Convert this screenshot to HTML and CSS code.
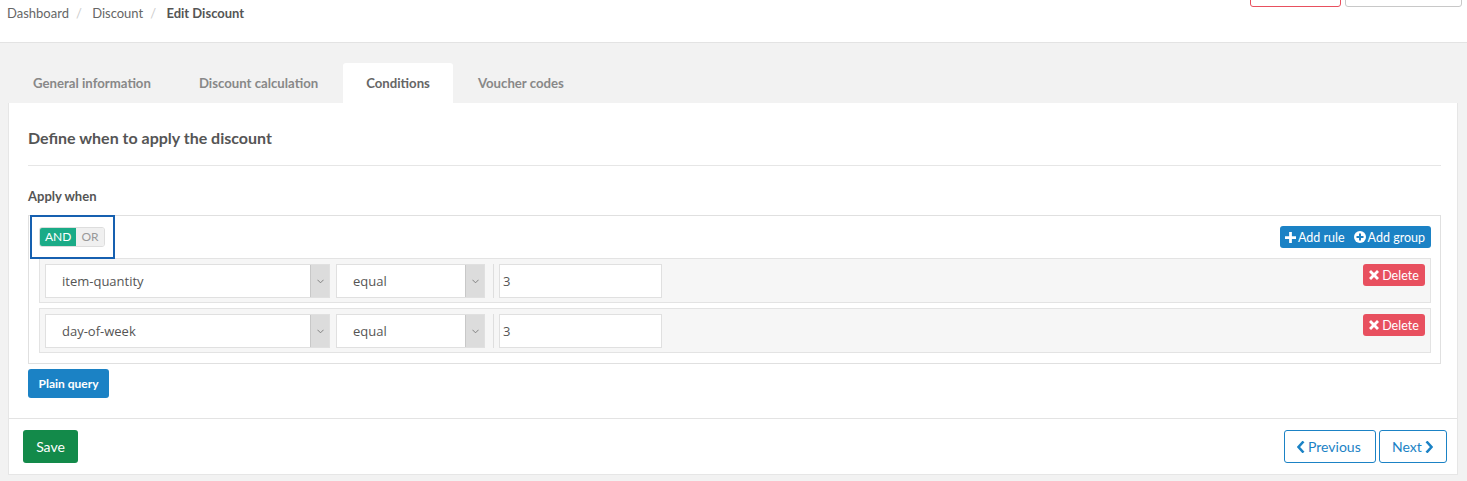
FILE: index.html
```html
<!DOCTYPE html>
<html>
<head>
<meta charset="utf-8">
<link rel="stylesheet" href="styles.css">
</head>
<body>
<header class="topbar">
  <nav class="crumbs">
    <span class="crumb">Dashboard</span><span class="sep">/</span>
    <span class="crumb">Discount</span><span class="sep">/</span>
    <span class="crumb current">Edit Discount</span>
  </nav>
  <div class="top-actions">
    <button class="btn-top danger-outline" aria-label="Delete"></button>
    <button class="btn-top grey-outline" aria-label="Back"></button>
  </div>
</header>
<main class="content">
  <ul class="tabs">
    <li class="tab">General information</li>
    <li class="tab">Discount calculation</li>
    <li class="tab active">Conditions</li>
    <li class="tab">Voucher codes</li>
  </ul>
  <section class="panel">
    <div class="panel-body">
      <h3 class="section-title">Define when to apply the discount</h3>
      <div class="divider"></div>
      <div class="label">Apply when</div>
      <div class="qb-group">
        <div class="focus-ring"></div>
        <div class="qb-header">
          <div class="toggle">
            <span class="tg on">AND</span><span class="tg">OR</span>
          </div>
          <button class="btn-add">
            <svg class="ic" viewBox="0 0 12 12" width="11" height="11"><path d="M4.5 0h3v4.5H12v3H7.5V12h-3V7.5H0v-3h4.5z" fill="#fff"/></svg>Add rule
            <svg class="ic ic2" viewBox="0 0 12 12" width="12" height="12"><circle cx="6" cy="6" r="6" fill="#fff"/><path d="M5 2.5h2V5h2.5v2H7v2.5H5V7H2.5V5H5z" fill="#1b82c5"/></svg>Add group
          </button>
        </div>
        <div class="qb-rule">
          <div class="sel wide"><span>item-quantity</span><span class="arrow"><svg viewBox="0 0 8 5" width="7" height="5"><path d="M0.5 0.5L4 4 7.5 0.5" fill="none" stroke="#777" stroke-width="1"/></svg></span></div>
          <div class="sel op"><span>equal</span><span class="arrow"><svg viewBox="0 0 8 5" width="7" height="5"><path d="M0.5 0.5L4 4 7.5 0.5" fill="none" stroke="#777" stroke-width="1"/></svg></span></div>
          <div class="vsep"></div>
          <div class="val">3</div>
          <button class="btn-del"><svg viewBox="0 0 10 10" width="10" height="10"><path d="M2 0L5 3 8 0 10 2 7 5 10 8 8 10 5 7 2 10 0 8 3 5 0 2z" fill="#fff"/></svg>Delete</button>
        </div>
        <div class="qb-rule">
          <div class="sel wide"><span>day-of-week</span><span class="arrow"><svg viewBox="0 0 8 5" width="7" height="5"><path d="M0.5 0.5L4 4 7.5 0.5" fill="none" stroke="#777" stroke-width="1"/></svg></span></div>
          <div class="sel op"><span>equal</span><span class="arrow"><svg viewBox="0 0 8 5" width="7" height="5"><path d="M0.5 0.5L4 4 7.5 0.5" fill="none" stroke="#777" stroke-width="1"/></svg></span></div>
          <div class="vsep"></div>
          <div class="val">3</div>
          <button class="btn-del"><svg viewBox="0 0 10 10" width="10" height="10"><path d="M2 0L5 3 8 0 10 2 7 5 10 8 8 10 5 7 2 10 0 8 3 5 0 2z" fill="#fff"/></svg>Delete</button>
        </div>
      </div>
      <button class="btn-plain">Plain query</button>
    </div>
    <div class="panel-footer">
      <button class="btn-save">Save</button>
      <div class="pager">
        <button class="btn-nav"><svg viewBox="0 0 8 12" width="8" height="12"><path d="M6.5 0.5L1.5 6l5 5.5" fill="none" stroke="#1b82c5" stroke-width="2.6"/></svg>Previous</button>
        <button class="btn-nav">Next<svg viewBox="0 0 8 12" width="8" height="12"><path d="M1.5 0.5L6.5 6l-5 5.5" fill="none" stroke="#1b82c5" stroke-width="2.6"/></svg></button>
      </div>
    </div>
  </section>
</main>
</body>
</html>
```
FILE: styles.css
```css
* { box-sizing: border-box; }
html, body { margin: 0; padding: 0; }
body {
  font-family: Lato, "Open Sans", Arial, sans-serif;
  font-size: 13px;
  color: #555;
  background: #f2f2f2;
  height: 481px;
  overflow: hidden;
}
button { font-family: inherit; cursor: pointer; }

.topbar {
  height: 43px;
  background: #fff;
  border-bottom: 1px solid #e3e3e3;
  display: flex;
  justify-content: space-between;
  align-items: flex-start;
  padding: 0 5px 0 7px;
}
.crumbs { padding-top: 4px; line-height: 18px; font-size: 13px; }
.crumb { color: #666; }
.crumb.current { color: #555; font-weight: bold; }
.sep { color: #ccc; margin: 0 7px; }
.top-actions { display: flex; gap: 4px; margin-top: -27px; }
.btn-top {
  height: 34px;
  background: #fff;
  border-radius: 3px;
  padding: 0;
}
.danger-outline { width: 91px; border: 1px solid #e8505f; }
.grey-outline { width: 117px; border: 1px solid #c8c8c8; }

.content { padding: 20px 9px 0 8px; }
.tabs {
  list-style: none;
  margin: 0;
  padding: 0;
  display: flex;
  height: 40px;
}
.tab {
  padding: 0 23px;
  margin-left: 2px;
  line-height: 40px;
  font-weight: bold;
  color: #888;
  font-size: 13.2px;
  border-radius: 3px 3px 0 0;
}
.tab.active { background: #fff; color: #666; }

.panel {
  background: #fff;
  border: 1px solid #e6e6e6;
  border-top: none;
}
.panel-body { padding: 25px 16px 20px 19px; }
.section-title {
  margin: 0;
  font-size: 16px;
  line-height: 20px;
  font-weight: bold;
  color: #555;
}
.divider { height: 1px; background: #e6e6e6; margin: 17px 0 22px; }
.label { font-size: 13px; font-weight: bold; line-height: 16px; color: #555; margin-bottom: 11px; }

.qb-group {
  position: relative;
  border: 1px solid #e0e0e0;
  padding: 10px 9px 10px 10px;
}
.focus-ring {
  position: absolute;
  left: 1px;
  top: -1px;
  width: 85px;
  height: 44px;
  border: 2px solid #1660b0;
}
.qb-header {
  display: flex;
  justify-content: space-between;
  align-items: flex-start;
  height: 32px;
}
.toggle {
  display: flex;
  margin-top: 1px;
  border: 1px solid #ddd;
  border-radius: 3px;
  overflow: hidden;
  font-family: Lato, sans-serif;
  font-size: 12px;
  line-height: 18px;
}
.tg { padding: 0 5px; color: #999; background: #f0f0f0; }
.tg.on { background: #1aab87; color: #fff; }
.btn-add {
  display: flex;
  align-items: center;
  height: 22px;
  padding: 0 6px 0 5px;
  background: #1b82c5;
  color: #fff;
  border: none;
  border-radius: 3px;
  font-size: 12.5px;
}
.ic { margin-right: 2px; }
.ic2 { margin-left: 9px; margin-right: 2px; }

.qb-rule {
  display: flex;
  align-items: flex-start;
  background: #f6f6f6;
  border: 1px solid #e3e3e3;
  padding: 5px;
  height: 45px;
  margin-bottom: 5px;
}
.qb-rule:last-child { margin-bottom: 0; }
.sel {
  display: flex;
  height: 34px;
  background: #fff;
  border: 1px solid #e0e0e0;
  font-family: "Open Sans", Arial, sans-serif;
  font-size: 13px;
  color: #555;
  align-items: stretch;
}
.sel > span:first-child { flex: 1; padding-left: 16px; line-height: 32px; }
.sel.wide { width: 285px; }
.sel.op { width: 149px; margin-left: 6px; }
.arrow {
  width: 19px;
  background: #dcdcdc;
  border-left: 1px solid #c8c8c8;
  display: flex;
  align-items: center;
  justify-content: center;
}
.vsep { width: 1px; height: 34px; background: #dedede; margin: 0 5px 0 8px; }
.val {
  width: 163px;
  height: 34px;
  background: #fff;
  border: 1px solid #e0e0e0;
  padding-left: 3px;
  line-height: 32px;
  font-family: "Open Sans", Arial, sans-serif;
  font-size: 13px;
  color: #555;
}
.btn-del {
  margin-left: auto;
  height: 22px;
  width: 62px;
  background: #e8505f;
  color: #fff;
  border: none;
  border-radius: 3px;
  font-size: 12.5px;
  display: flex;
  align-items: center;
  justify-content: center;
  gap: 3px;
  padding: 0;
}

.btn-plain {
  margin-top: 5px;
  height: 29px;
  width: 81px;
  background: #1b82c5;
  color: #fff;
  border: none;
  border-radius: 3px;
  font-size: 12px;
  font-weight: bold;
  padding: 0;
  display: block;
}

.panel-footer {
  border-top: 1px solid #e3e3e3;
  display: flex;
  justify-content: space-between;
  padding: 11px 10px 11px 14px;
}
.btn-save {
  height: 33px;
  width: 55px;
  background: #138a4a;
  color: #fff;
  border: none;
  border-radius: 3px;
  font-size: 14px;
  padding: 0;
}
.pager { display: flex; gap: 3px; }
.btn-nav {
  height: 33px;
  background: #fff;
  border: 1px solid #1b82c5;
  color: #1b82c5;
  border-radius: 3px;
  font-size: 14px;
  display: flex;
  align-items: center;
  gap: 3px;
  padding: 0 10px 0 12px;
}
.btn-nav:first-child { width: 92px; }
.btn-nav:last-child { width: 68px; }
```
